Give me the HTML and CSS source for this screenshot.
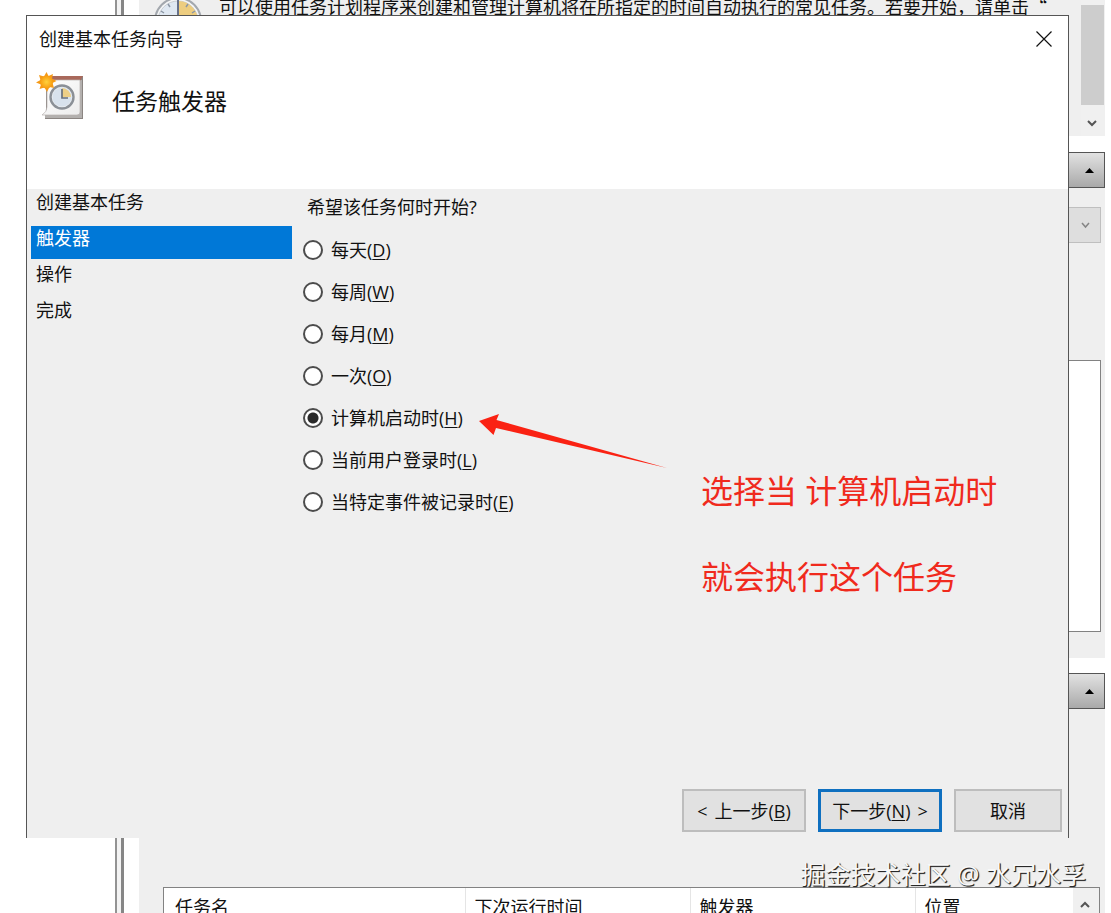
FILE: index.html
```html
<!DOCTYPE html>
<html lang="zh-CN">
<head>
<meta charset="utf-8">
<title>创建基本任务向导</title>
<link rel="stylesheet" href="styles.css">
</head>
<body>
<div class="desktop">
  <div class="console">
    <div class="tree"></div>
    <div class="splitter"></div>
    <main class="content">
      <section class="overview">
        <div class="overview-text">
          <svg class="overview-clock" viewBox="0 3 48 15" aria-hidden="true">
            <circle cx="24" cy="24" r="23" fill="#f4f5f6" stroke="#a3a8ae" stroke-width="2"/>
            <circle cx="24" cy="24" r="20" fill="#dfe8f2" stroke="#c9ced4"/>
            <path d="M25 4A20 20 0 0 1 44 24H25z" fill="#edcd80"/>
            <path d="M24 3V24" stroke="#66718a" stroke-width="2"/>
            <path d="M14 7l2 3M34 7l-2 3M7 14l3 2M41 14l-3 2" stroke="#8c97a5" stroke-width="1.5"/>
          </svg>
          <p class="overview-copy">可以使用任务计划程序来创建和管理计算机将在所指定的时间自动执行的常见任务。若要开始，请单击<span class="quote">“</span></p>
        </div>
        <div class="scrollbar">
          <div class="thumb"></div>
          <button class="scroll-button" aria-label="向下滚动"><svg width="10" height="7" viewBox="0 0 10 7"><path d="M1 1l4 4 4-4" fill="none" stroke="#555" stroke-width="2"/></svg></button>
        </div>
      </section>
      <button class="section-bar" aria-label="折叠任务状态"><svg width="9" height="5" viewBox="0 0 9 5"><path d="M0 5L4.500 0 9 5z"/></svg></button>
      <section class="status">
        <button class="period" aria-label="时间段"><svg width="9" height="7" viewBox="0 0 9 7"><path d="M1 1l3.500 4L8 1" fill="none" stroke="#858585" stroke-width="1.500"/></svg></button>
        <div class="status-list"></div>
      </section>
      <button class="section-bar" aria-label="折叠活动任务"><svg width="9" height="5" viewBox="0 0 9 5"><path d="M0 5L4.500 0 9 5z"/></svg></button>
      <section class="active">
        <div class="task-list">
          <table class="task-table">
            <thead><tr><th class="col-name">任务名</th><th class="col-time">下次运行时间</th><th class="col-time">触发器</th><th>位置</th></tr></thead>
          </table>
          <button class="list-up" aria-label="向上滚动"><svg width="10" height="7" viewBox="0 0 10 7"><path d="M1 6l4-4 4 4" fill="none" stroke="#555" stroke-width="2"/></svg></button>
        </div>
      </section>
    </main>
  </div>

  <div class="wizard" role="dialog" aria-labelledby="wizard-title">
    <header class="wizard-head">
      <div class="titlebar">
        <span id="wizard-title">创建基本任务向导</span>
        <button class="close" aria-label="关闭"><svg width="16" height="16" viewBox="0 0 16 16"><path d="M0.500 0.500l15 15M15.500 0.500l-15 15" stroke="#111" stroke-width="1.200"/></svg></button>
      </div>
      <div class="banner">
        <svg class="task-icon" width="48" height="48" viewBox="0 0 48 48" aria-hidden="true">
          <defs>
            <linearGradient id="paper" x1="0" y1="0" x2="1" y2="1"><stop offset="0" stop-color="#fff"/><stop offset="1" stop-color="#ececec"/></linearGradient>
            <radialGradient id="sun"><stop offset="0" stop-color="#ffd23c"/><stop offset="1" stop-color="#f79b10"/></radialGradient>
          </defs>
          <path d="M10 4H47V47H9V42H10z" fill="#8b8582"/>
          <path d="M9 43h34V8h3v38H9z" fill="#b3b0ae"/>
          <path d="M11 4H47L44 9H11z" fill="#a9695b"/>
          <path d="M11 8h33v32q0 3-3 3H6q5-3 5-8z" fill="url(#paper)" stroke="#b7b2b0" stroke-width="0.700"/>
          <circle cx="26" cy="25" r="11.500" fill="#e9edf1" stroke="#8b9097" stroke-width="2.400"/>
          <circle cx="26" cy="25" r="9.500" fill="#d8e2ed"/>
          <path d="M26 16a9 9 0 0 1 9 9h-9z" fill="#edcf86"/>
          <path d="M26 17v9h6" fill="none" stroke="#69717c" stroke-width="1.700"/>
          <path d="M10.500 0L12.500 4 17 2 16 6.500 20.500 9 16.500 11 18 16 13.500 15 11 20 8.500 15.500 3.500 17 5 12.500 0 10.500 4.500 8 3 3 8 4.500z" fill="#f59a18"/>
          <circle cx="10.500" cy="10" r="6.500" fill="url(#sun)"/>
        </svg>
        <h1 class="page-title">任务触发器</h1>
      </div>
    </header>
    <div class="wizard-body">
      <ol class="steps">
        <li class="step">创建基本任务</li>
        <li class="step step-current" aria-current="step">触发器</li>
        <li class="step">操作</li>
        <li class="step">完成</li>
      </ol>
      <fieldset class="choices">
        <legend class="question">希望该任务何时开始?</legend>
        <label class="choice"><input type="radio" name="trigger"><span>每天(<u>D</u>)</span></label>
        <label class="choice"><input type="radio" name="trigger"><span>每周(<u>W</u>)</span></label>
        <label class="choice"><input type="radio" name="trigger"><span>每月(<u>M</u>)</span></label>
        <label class="choice"><input type="radio" name="trigger"><span>一次(<u>O</u>)</span></label>
        <label class="choice"><input type="radio" name="trigger" checked><span>计算机启动时(<u>H</u>)</span></label>
        <label class="choice"><input type="radio" name="trigger"><span>当前用户登录时(<u>L</u>)</span></label>
        <label class="choice"><input type="radio" name="trigger"><span>当特定事件被记录时(<u>E</u>)</span></label>
      </fieldset>
    </div>
    <footer class="wizard-foot">
      <button class="action"><span>&lt;</span><span>上一步(<u>B</u>)</span></button>
      <button class="action action-default"><span>下一步(<u>N</u>)</span><span>&gt;</span></button>
      <button class="action action-cancel">取消</button>
    </footer>
  </div>

  <svg class="arrow" width="190" height="56" viewBox="0 0 190 56" aria-hidden="true"><path d="M0 8L20 1 17.500 7 188 55 17 15 14.500 22z" fill="#fa2213"/></svg>
  <div class="note"><p>选择当 计算机启动时</p><p>就会执行这个任务</p></div>
  <div class="watermark">掘金技术社区 @ 水冗水孚</div>
</div>
</body>
</html>
```
FILE: styles.css
```css
* { box-sizing: border-box; }

body {
  margin: 0;
  background: #fff;
  color: #111;
  font: 18px/24px "Open Sans", "Noto Sans CJK SC", sans-serif;
}

p, h1, ol, fieldset { margin: 0; padding: 0; }

button {
  padding: 0;
  border: 0;
  color: inherit;
  font: inherit;
}

svg { display: block; }
u { text-underline-offset: 2px; text-decoration-thickness: 1px; }

.desktop {
  position: relative;
  height: 100vh;
  overflow: hidden;
}

/* Console window behind the wizard */
.console {
  display: grid;
  grid-template-columns: 115px 9px 1fr;
  height: 100%;
  padding-right: 6px;
}

.splitter {
  border-left: 2px solid #939393;
  border-right: 3px solid #868686;
  background: #f3f3f3;
}

.content {
  display: flex;
  flex-direction: column;
  min-width: 0;
  margin-left: 15px;
}

.overview {
  display: flex;
  justify-content: space-between;
  height: 136px;
  margin-bottom: 16px;
  background: #efefef;
}

.overview-text {
  display: flex;
  align-items: flex-start;
  gap: 17px;
  padding-left: 15px;
}

.overview-clock { width: 48px; height: 15px; }
.overview-copy { line-height: 12px; white-space: nowrap; }
.quote { font-family: "Noto Sans CJK SC", sans-serif; }

.scrollbar {
  display: flex;
  flex-direction: column;
  width: 24px;
  padding-top: 5px;
  background: #f0f0f0;
}

.thumb { height: 100px; margin-right: 1px; background: #cdcdcd; }

.scroll-button {
  display: grid;
  flex: 1;
  place-items: center;
  padding: 6px 2px 0 0;
  background: #f0f0f0;
}

.section-bar {
  display: flex;
  align-items: center;
  justify-content: flex-end;
  height: 36px;
  padding-right: 10px;
  border: 1px solid #555;
  background: linear-gradient(#e2e2e2, #a9a9a9);
}

.status {
  display: flex;
  flex-direction: column;
  height: 470px;
  margin-bottom: 15px;
  padding: 19px 4px 26px 24px;
  background: #efefef;
}

.period {
  display: flex;
  align-items: center;
  align-self: flex-end;
  justify-content: flex-end;
  width: 200px;
  height: 36px;
  margin-bottom: 117px;
  padding-right: 10px;
  border: 1px solid #bfbfbf;
  background: #dedede;
}

.status-list {
  flex: 1;
  border: 1px solid #828282;
  background: #fff;
}

.active {
  flex: 1;
  padding: 178px 5px 0 24px;
  background: #efefef;
}

.task-list {
  display: flex;
  height: 100px;
  border: 1px solid #828282;
  border-bottom: 0;
  background: #fff;
}

.task-table {
  flex: 1;
  table-layout: fixed;
  height: 38px;
  border-collapse: collapse;
}

.task-table th {
  padding: 0 0 0 9px;
  border-right: 1px solid #e5e5e5;
  font-weight: 400;
  text-align: left;
}

.task-table th:last-child { border-right: 0; }
.task-table .col-name { width: 301px; padding-left: 11px; }
.task-table .col-time { width: 225px; }

.list-up {
  width: 26px;
  height: 32px;
  padding-left: 7px;
  background: #f0f0f0;
}

/* Wizard dialog */
.wizard {
  position: absolute;
  inset: 15px 42px 75px 26px;
  display: flex;
  flex-direction: column;
  border: 1px solid #555;
  border-bottom: 0;
  background: #efefef;
}

.wizard-head { height: 173px; background: #fff; }

.titlebar {
  display: flex;
  align-items: center;
  justify-content: space-between;
  height: 45px;
  padding: 0 16px 0 12px;
}

.close { background: none; }

.banner {
  display: flex;
  align-items: center;
  gap: 28px;
  padding: 11px 9px;
}

.page-title { padding-top: 9px; font-size: 23px; font-weight: 400; line-height: 24px; }

.wizard-body {
  display: grid;
  flex: 1;
  grid-template-columns: 265px 1fr;
  align-items: start;
}

.steps { padding: 1px 0 0 4px; list-style: none; }

.step {
  height: 33px;
  margin-bottom: 3px;
  padding-left: 5px;
  line-height: 25px;
}

.step-current { background: #0078d7; color: #fff; }

.choices { border: 0; padding: 0 0 0 11px; }
.question { margin-bottom: 4px; padding: 0 0 0 4px; line-height: 36px; }

.choice {
  display: flex;
  align-items: center;
  gap: 8px;
  height: 42px;
}

.choice input {
  width: 20px;
  height: 20px;
  margin: 0;
  border: 2px solid #4c4c4c;
  border-radius: 50%;
  appearance: none;
  background: #fff;
}

.choice input:checked { background: radial-gradient(circle, #2b2b2b 5px, #fff 6px); }

.wizard-foot {
  display: flex;
  justify-content: flex-end;
  gap: 12px;
  padding: 0 6px 6px;
}

.action {
  display: flex;
  align-items: center;
  justify-content: center;
  gap: 7px;
  width: 124px;
  height: 43px;
  border: 2px solid #bdbdbd;
  background: #e1e1e1;
}

.action-default { border: 3px solid #0f70c0; }
.action-cancel { width: 108px; }

/* Annotations drawn over the dialog */
.arrow { position: absolute; top: 413px; left: 479px; }

.note {
  position: absolute;
  top: 469px;
  left: 701px;
  color: #f02a1d;
  font-size: 32px;
  line-height: 43px;
}

.note p + p { margin-top: 43px; }

.watermark {
  position: absolute;
  right: 25px;
  bottom: 21px;
  color: #f8f8f8;
  font-size: 25px;
  line-height: 36px;
  text-shadow: 1px 1px 1px #222, 1px 1px 0 #555;
}
```
